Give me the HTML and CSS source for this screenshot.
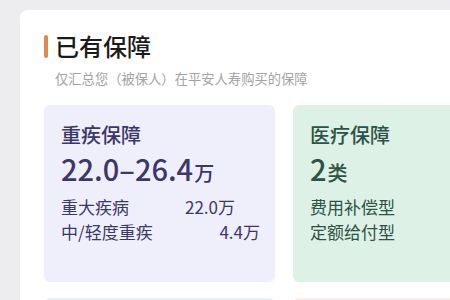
FILE: index.html
```html
<!DOCTYPE html>
<html lang="zh-CN">
<head>
    <meta charset="UTF-8">
    <meta name="viewport" content="width=device-width, initial-scale=1.0">
    <title>已有保障</title>
    <link rel="stylesheet" href="styles.css">
</head>
<body>
    <div class="panel">
        <div class="panel-head">
            <span class="mark"></span>
            <h1>已有保障</h1>
        </div>
        <p class="sub">仅汇总您（被保人）在平安人寿购买的保障</p>

        <div class="cards">
            <div class="card card-purple">
                <div class="card-title">重疾保障</div>
                <div class="amount">22.0–26.4<span class="unit">万</span></div>
                <div class="row row-first"><span>重大疾病</span><span>22.0万</span></div>
                <div class="row"><span>中/轻度重疾</span><span>4.4万</span></div>
            </div>
            <div class="card card-green">
                <div class="card-title">医疗保障</div>
                <div class="amount">2<span class="unit">类</span></div>
                <div class="row row-first"><span>费用补偿型</span></div>
                <div class="row"><span>定额给付型</span></div>
            </div>
            <div class="card card-blue"></div>
            <div class="card card-pink"></div>
        </div>
    </div>
</body>
</html>
```

FILE: styles.css
```css
html, body {
    margin: 0;
    padding: 0;
}
body {
    background-color: #ededf0;
    font-family: "Noto Sans CJK SC", "Noto Sans", sans-serif;
    width: 450px;
    height: 300px;
    overflow: hidden;
}
.panel {
    margin: 10px 0 0 20px;
    width: 430px;
    height: 290px;
    overflow: hidden;
    background: #fff;
    border-radius: 8px 0 0 0;
    padding: 20px 0 0 24px;
    box-sizing: border-box;
}
.panel-head {
    display: flex;
    align-items: center;
    height: 32px;
}
.mark {
    width: 4px;
    height: 23px;
    border-radius: 2px;
    background: #e0894f;
    margin-right: 7px;
}
h1 {
    margin: 0;
    font-size: 24px;
    font-weight: 500;
    line-height: 32px;
    color: #1b1b1b;
}
.sub {
    margin: 7px 0 0 11px;
    font-size: 13.3px;
    line-height: 20px;
    color: #a3a3a3;
}
.cards {
    display: grid;
    grid-template-columns: 231px 231px;
    grid-auto-rows: 177px;
    column-gap: 18px;
    row-gap: 16px;
    margin-top: 16px;
}
.card {
    border-radius: 6px;
    padding: 16px 15px 0 17px;
}
.card-purple {
    background: #efeffb;
    color: #3c376a;
}
.card-green {
    background: #ddf1e6;
    color: #2c5345;
}
.card-blue {
    background: #e6f3fb;
}
.card-pink {
    background: #fbeeea;
}
.card-title {
    font-size: 20px;
    line-height: 28px;
    font-weight: 500;
}
.amount {
    font-size: 29px;
    line-height: 36px;
    font-weight: 500;
    margin-top: 1px;
}
.unit {
    font-size: 20px;
    margin-left: 1px;
}
.row {
    display: flex;
    justify-content: space-between;
    font-size: 17px;
    line-height: 25px;
}
.row-first {
    margin-top: 3px;
}
.card-purple .row-first {
    padding-right: 25px;
}
```
